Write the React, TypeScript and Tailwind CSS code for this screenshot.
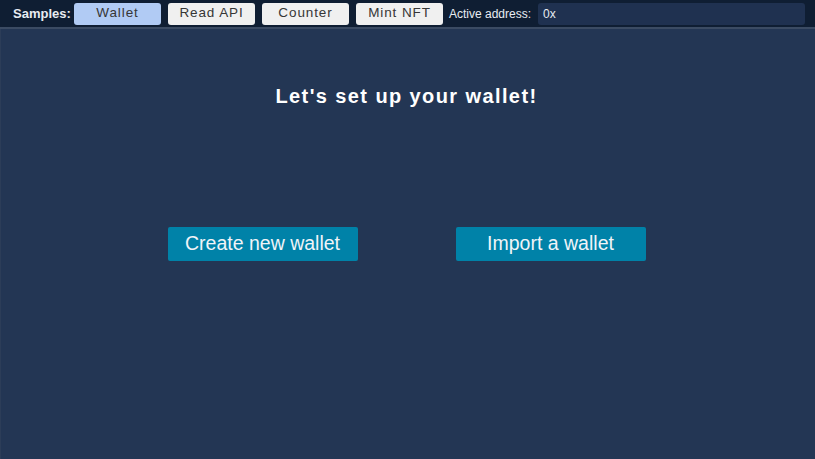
import React from "react";

const btns = ["Wallet", "Read API", "Counter", "Mint NFT"];

export default function App() {
  return (
    <div className="w-[815px] h-[459px] flex flex-col bg-[#233654] overflow-hidden" style={{ fontFamily: '"Liberation Sans", Arial, sans-serif' }}>
      <div className="h-[27px] flex items-center bg-[#0f1e33] shrink-0">
        <span className="ml-[13px] w-[61px] text-[13px] font-bold text-[#e8ecf2] tracking-[0px]">Samples:</span>
        <div className="flex gap-[7px]">
          {btns.map((b, i) => (
            <div
              key={b}
              className={`w-[87px] h-[22px] rounded-[3px] flex items-center justify-center text-[13.5px] text-[#363636] tracking-[0.9px] ${i === 0 ? "bg-[#b1cbf4]" : "bg-[#f0f0f0]"}`}
            >
              {b}
            </div>
          ))}
        </div>
        <span className="ml-[6px] text-[12px] text-[#e8ecf2] w-[89px]">Active address:</span>
        <div className="w-[267px] h-[22px] rounded-[3px] bg-[#1f3150] flex items-center pl-[5px] text-[12px] text-[#e8ecf2]">0x</div>
      </div>
      <div className="h-[2px] bg-[#3b4b63] shrink-0" />
      <div className="flex-1 border-l border-[#2c3d58] flex flex-col items-center pr-[3px]">
        <div className="mt-[55px] text-[20px] font-bold text-white tracking-[1.4px] leading-[24px]">Let's set up your wallet!</div>
        <div className="mt-[119px] flex gap-[98px]">
          <div className="w-[190px] h-[34px] bg-[#0082a8] rounded-[2px] flex items-center justify-center text-[19.5px] text-[#f0f4f8]">Create new wallet</div>
          <div className="w-[190px] h-[34px] bg-[#0082a8] rounded-[2px] flex items-center justify-center text-[19.5px] text-[#f0f4f8]">Import a wallet</div>
        </div>
      </div>
    </div>
  );
}
